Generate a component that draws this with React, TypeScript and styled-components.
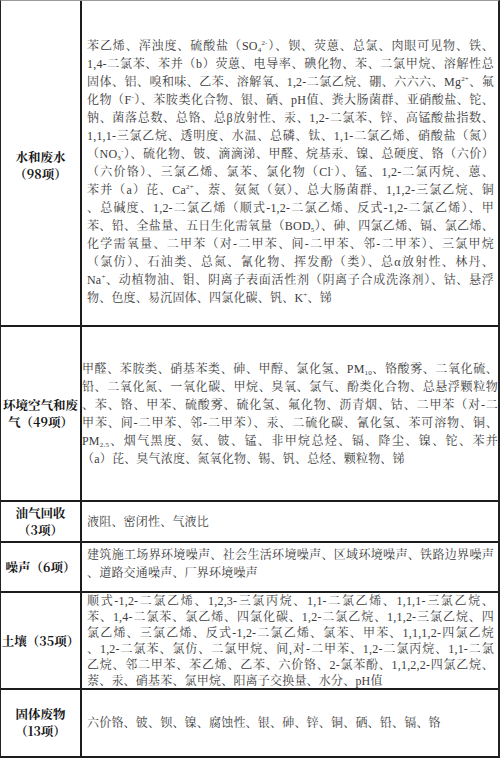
import React from "react";
import styled, { createGlobalStyle } from "styled-components";

const GlobalStyle = createGlobalStyle`
  html, body { margin: 0; padding: 0; background: #ffffff; }
  #root { width: 500px; }
`;

const Table = styled.div`
  width: 500px;
  box-sizing: border-box;
  border-top: 1px solid #9a9a9a;
  border-left: 1.5px solid #222;
  border-right: 2px solid #222;
  display: flex;
  flex-direction: column;
`;

const Row = styled.div<{ $h: number }>`
  display: grid;
  grid-template-columns: 81px 1fr;
  height: ${(p) => p.$h}px;
  box-sizing: border-box;
  border-bottom: 2px solid #1c1c1c;
`;

const Label = styled.div<{ $pt?: number }>`
  display: flex;
  flex-direction: column;
  align-items: center;
  justify-content: center;
  padding-top: ${(p) => p.$pt ?? 0}px;
  border-right: 2px solid #1c1c1c;
  font-family: "Noto Serif CJK SC", "Noto Sans CJK SC", serif;
  font-weight: 700;
  font-size: 12.5px;
  line-height: 17px;
  color: #151515;
  text-align: center;
`;

const LabelLine = styled.span`
  display: block;
  white-space: nowrap;
`;

const Content = styled.div<{ $lh: number; $pt?: number; $pb?: number }>`
  display: flex;
  flex-direction: column;
  justify-content: ${(p) => (p.$pt !== undefined ? "flex-start" : "center")};
  padding: ${(p) => p.$pt ?? 0}px 4px ${(p) => p.$pb ?? 0}px 5px;
  font-family: "Liberation Serif", "Noto Serif CJK SC", "Noto Sans CJK SC", serif;
  font-size: 12px;
  letter-spacing: 0.2px;
  line-height: ${(p) => p.$lh}px;
  color: #3c3c3c;
  min-width: 0;
`;

const Line = styled.div<{ $last?: boolean }>`
  text-align: justify;
  text-align-last: ${(p) => (p.$last ? "left" : "justify")};
  white-space: nowrap;
`;

const Sup = styled.sup`
  font-size: 7px;
  line-height: 0;
  vertical-align: 5px;
`;

const Sub = styled.sub`
  font-size: 7px;
  line-height: 0;
  vertical-align: -2px;
`;

type Para = React.ReactNode[];

const water: Para = [
  <>苯乙烯、浑浊度、硫酸盐（SO<Sub>4</Sub><Sup>2-</Sup>）、钡、荧蒽、总氯、肉眼可见物、铁、</>,
  <>1,4-二氯苯、苯并（b）荧蒽、电导率、碘化物、苯、二氯甲烷、溶解性总</>,
  <>固体、铝、嗅和味、乙苯、溶解氧、1,2-二氯乙烷、硼、六六六、Mg<Sup>2+</Sup>、氟</>,
  <>化物（F<Sup>-</Sup>）、苯胺类化合物、银、硒、pH值、粪大肠菌群、亚硝酸盐、铊、</>,
  <>钠、菌落总数、总铬、总β放射性、汞、1,2-二氯苯、锌、高锰酸盐指数、</>,
  <>1,1,1-三氯乙烷、透明度、水温、总磷、钛、1,1-二氯乙烯、硝酸盐（氮）</>,
  <>（NO<Sub>3</Sub><Sup>-</Sup>）、硫化物、铍、滴滴涕、甲醛、烷基汞、镍、总硬度、铬（六价）</>,
  <>（六价铬）、三氯乙烯、氯苯、氯化物（Cl<Sup>-</Sup>）、锰、1,2-二氯丙烷、蒽、</>,
  <>苯并（a）芘、Ca<Sup>2+</Sup>、萘、氨氮（氨）、总大肠菌群、1,1,2-三氯乙烷、铜</>,
  <>、总碱度、1,2-二氯乙烯（顺式-1,2-二氯乙烯、反式-1,2-二氯乙烯）、甲</>,
  <>苯、铅、全盐量、五日生化需氧量（BOD<Sub>5</Sub>）、砷、四氯乙烯、镉、氯乙烯、</>,
  <>化学需氧量、二甲苯（对-二甲苯、间-二甲苯、邻-二甲苯）、三氯甲烷</>,
  <>（氯仿）、石油类、总氮、氰化物、挥发酚（类）、总α放射性、林丹、</>,
  <>Na<Sup>+</Sup>、动植物油、钼、阴离子表面活性剂（阴离子合成洗涤剂）、钴、悬浮</>,
  <>物、色度、易沉固体、四氯化碳、钒、K<Sup>+</Sup>、锑</>,
];

const air: Para = [
  <>甲醛、苯胺类、硝基苯类、砷、甲醇、氯化氢、PM<Sub>10</Sub>、铬酸雾、二氧化硫、</>,
  <>铅、二氧化氮、一氧化碳、甲烷、臭氧、氯气、酚类化合物、总悬浮颗粒物</>,
  <>、苯、铬、甲苯、硫酸雾、硫化氢、氟化物、沥青烟、钴、二甲苯（对-二</>,
  <>甲苯、间-二甲苯、邻-二甲苯）、汞、二硫化碳、氰化氢、苯可溶物、铜、</>,
  <>PM<Sub>2.5</Sub>、烟气黑度、氨、铍、锰、非甲烷总烃、镉、降尘、镍、铊、苯并</>,
  <>（a）芘、臭气浓度、氮氧化物、锡、钒、总烃、颗粒物、锑</>,
];

const gas: Para = [<>液阻、密闭性、气液比</>];

const noise: Para = [
  <>建筑施工场界环境噪声、社会生活环境噪声、区域环境噪声、铁路边界噪声</>,
  <>、道路交通噪声、厂界环境噪声</>,
];

const soil: Para = [
  <>顺式-1,2-二氯乙烯、1,2,3-三氯丙烷、1,1-二氯乙烯、1,1,1-三氯乙烷、</>,
  <>苯、1,4-二氯苯、氯乙烯、四氯化碳、1,2-二氯乙烷、1,1,2-三氯乙烷、四</>,
  <>氯乙烯、三氯乙烯、反式-1,2-二氯乙烯、氯苯、甲苯、1,1,1,2-四氯乙烷</>,
  <>、1,2-二氯苯、氯仿、二氯甲烷、间,对-二甲苯、1,2-二氯丙烷、1,1-二氯</>,
  <>乙烷、邻二甲苯、苯乙烯、乙苯、六价铬、2-氯苯酚、1,1,2,2-四氯乙烷、</>,
  <>萘、汞、硝基苯、氯甲烷、阳离子交换量、水分、pH值</>,
];

const solid: Para = [<>六价铬、铍、钡、镍、腐蚀性、银、砷、锌、铜、硒、铅、镉、铬</>];

type RowData = {
  label: string[];
  lines: Para;
  h: number;
  lh: number;
  pt?: number;
  pb?: number;
  lpt?: number;
};

const rows: RowData[] = [
  { label: ["水和废水", "（98项）"], lines: water, h: 326, lh: 18, pt: 36, lpt: 6 },
  { label: ["环境空气和废", "气（49项）"], lines: air, h: 175, lh: 18, pb: -4 },
  { label: ["油气回收", "（3项）"], lines: gas, h: 41, lh: 18 },
  { label: ["噪声（6项）"], lines: noise, h: 50, lh: 18, pb: 6 },
  { label: ["土壤（35项）"], lines: soil, h: 97, lh: 16 },
  { label: ["固体废物", "（13项）"], lines: solid, h: 68, lh: 18 },
];

export default function App() {
  return (
    <>
      <GlobalStyle />
      <Table>
        {rows.map((r, i) => (
          <Row key={i} $h={r.h}>
            <Label $pt={r.lpt}>
              {r.label.map((t, j) => (
                <LabelLine key={j}>{t}</LabelLine>
              ))}
            </Label>
            <Content $lh={r.lh} $pt={r.pt} $pb={r.pb}>
              {r.lines.map((l, j) => (
                <Line key={j} $last={j === r.lines.length - 1}>
                  {l}
                </Line>
              ))}
            </Content>
          </Row>
        ))}
      </Table>
    </>
  );
}
